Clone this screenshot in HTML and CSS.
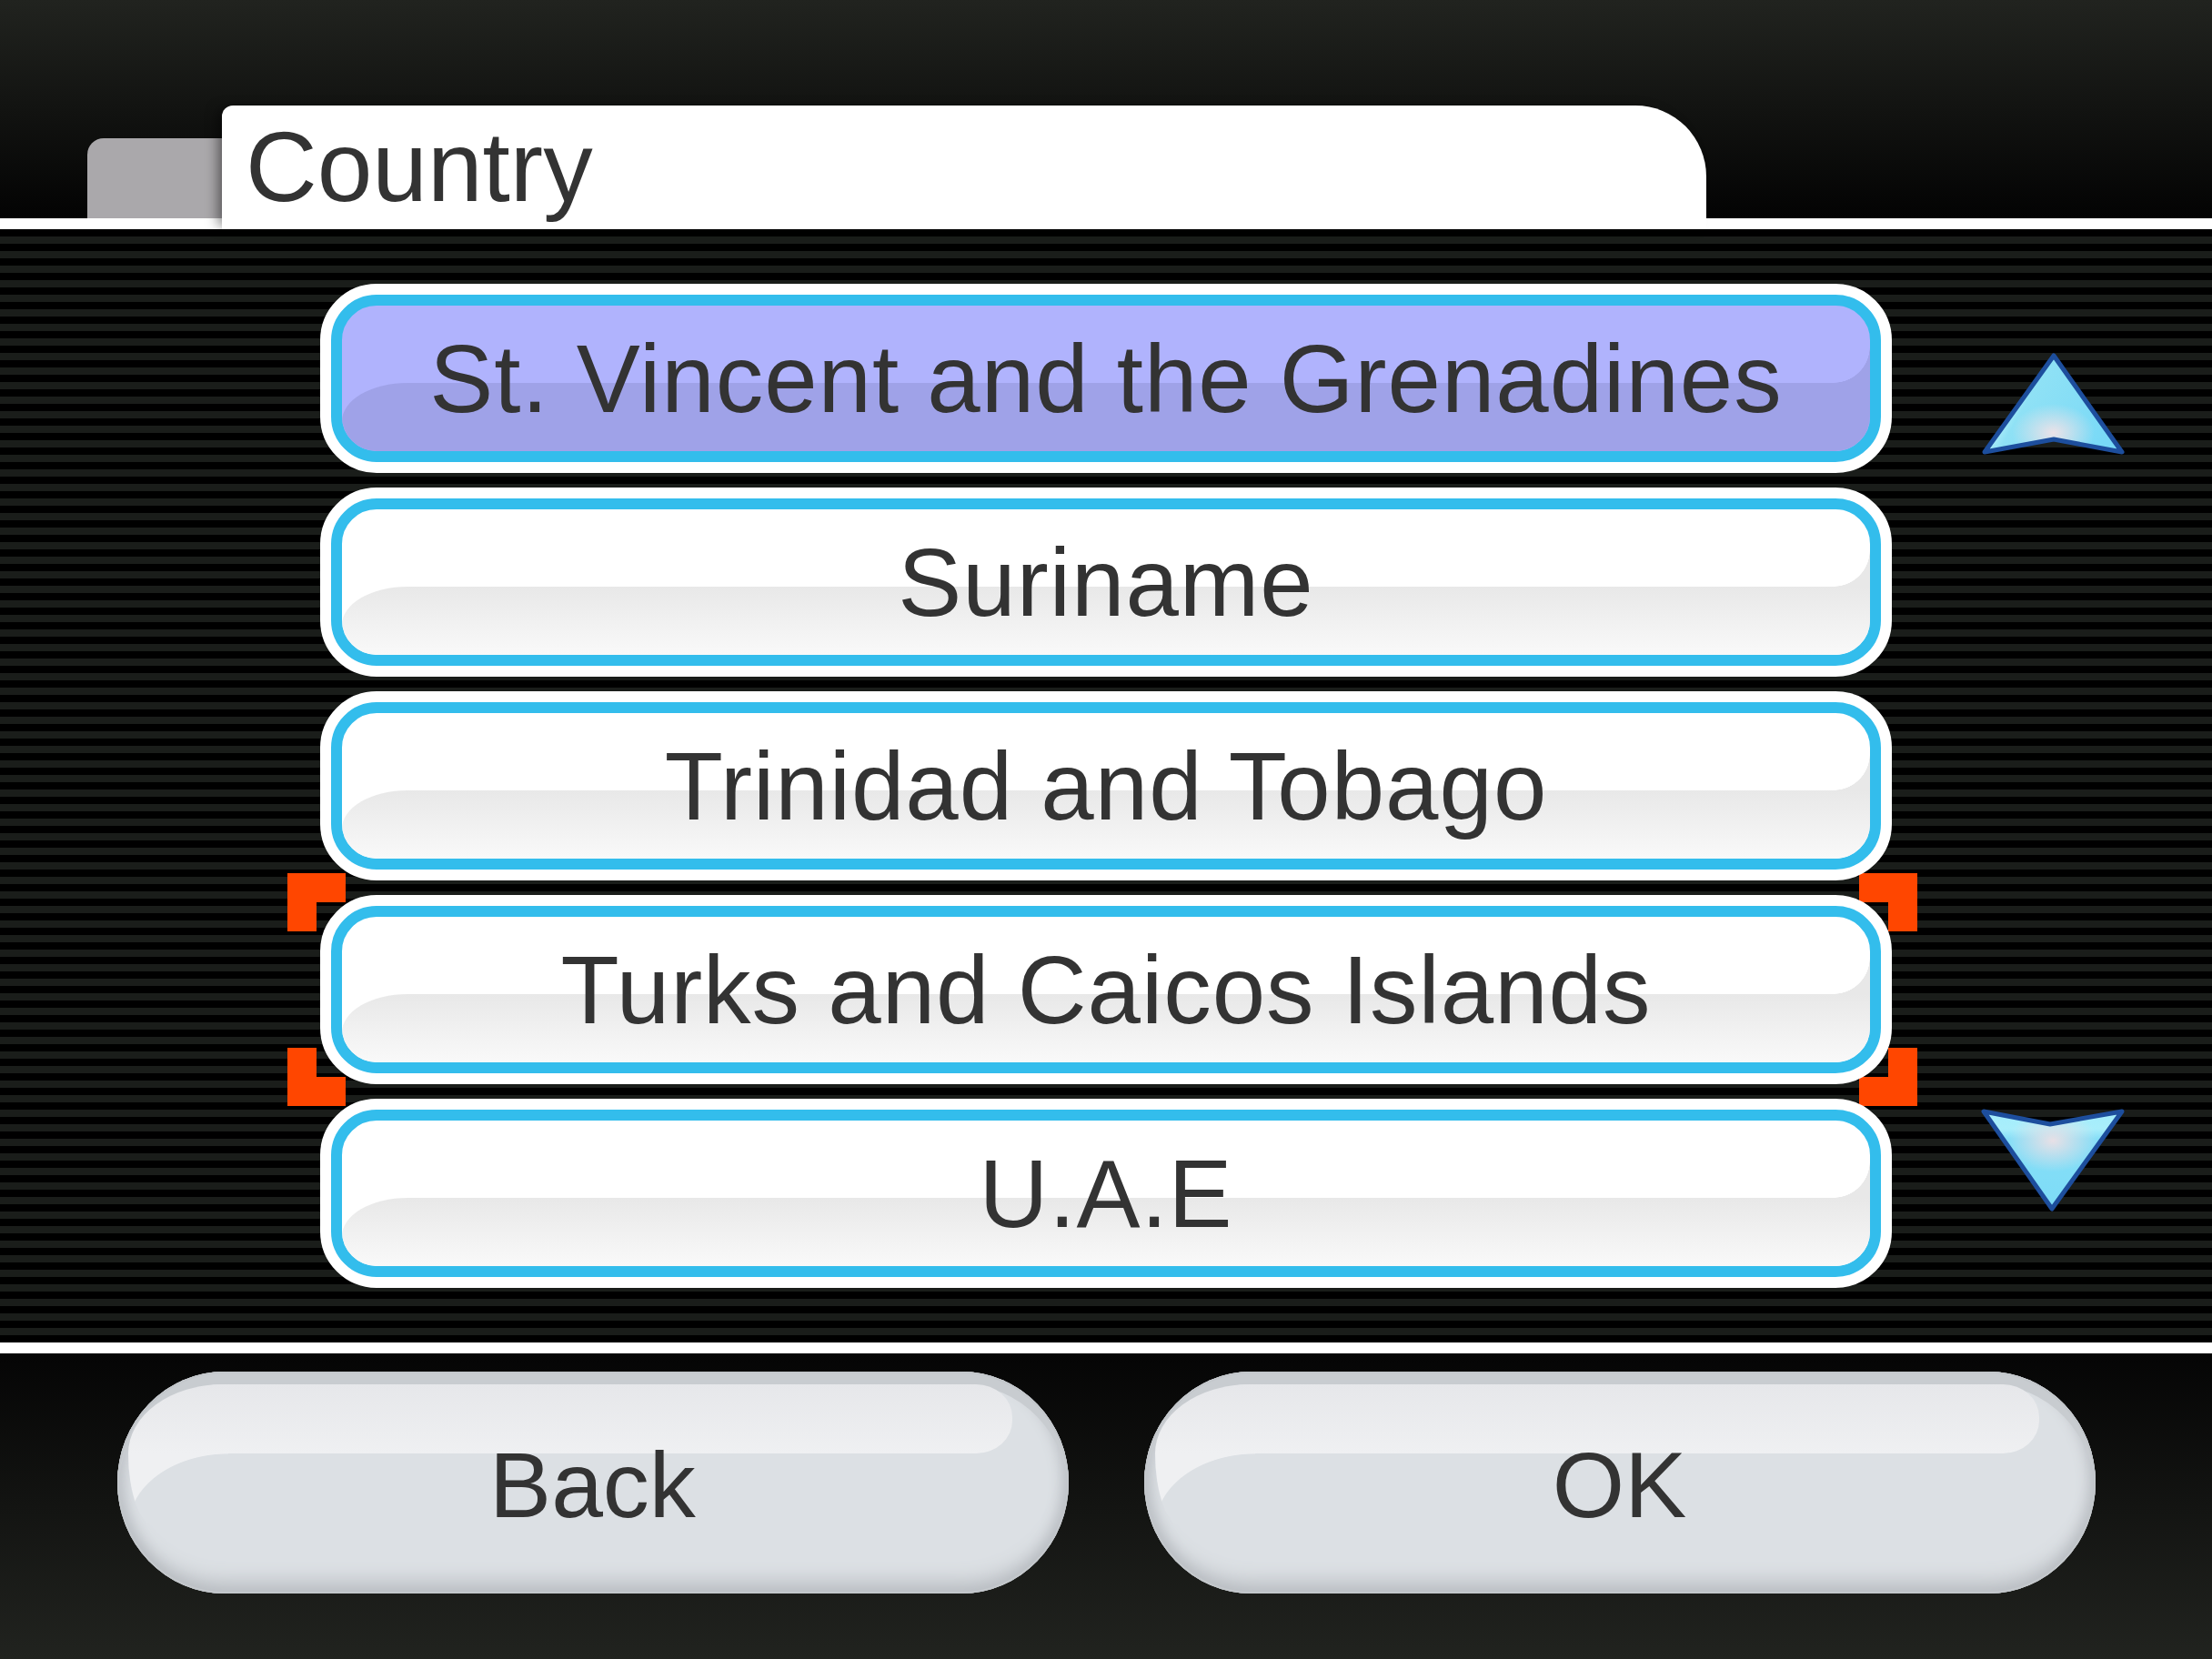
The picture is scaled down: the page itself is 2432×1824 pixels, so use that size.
FILE: index.html
```html
<!DOCTYPE html>
<html lang="en">
<head>
<meta charset="utf-8">
<title>Country</title>
<link rel="stylesheet" href="styles.css">
</head>
<body>
<div class="screen">
  <header class="header">
    <div class="tab-back"></div>
    <div class="tab-title">Country</div>
  </header>
  <div class="rule"></div>
  <main class="band">
    <div class="gutter"></div>
    <ul class="list">
      <li class="item selected"><div class="face"><span>St. Vincent and the Grenadines</span></div></li>
      <li class="item"><div class="face"><span>Suriname</span></div></li>
      <li class="item"><div class="face"><span>Trinidad and Tobago</span></div></li>
      <li class="item focused">
        <i class="bracket tl"></i><i class="bracket bl"></i><i class="bracket tr"></i><i class="bracket br"></i>
        <div class="face"><span>Turks and Caicos Islands</span></div>
      </li>
      <li class="item"><div class="face"><span>U.A.E</span></div></li>
    </ul>
    <div class="scroll">
      <svg class="arrow" width="160" height="120" viewBox="0 0 160 120">
        <defs>
          <linearGradient id="ug" x1="0" y1="0.2" x2="1" y2="0.6">
            <stop offset="0" stop-color="#9ae9fc"/>
            <stop offset="0.28" stop-color="#aaedf9"/>
            <stop offset="0.36" stop-color="#8fe1f5"/>
            <stop offset="0.7" stop-color="#84ddf6"/>
            <stop offset="1" stop-color="#78d9f7"/>
          </linearGradient>
          <radialGradient id="ur" cx="0.5" cy="0.8" r="0.3">
            <stop offset="0" stop-color="#ece2e8" stop-opacity="1"/>
            <stop offset="1" stop-color="#ece2e8" stop-opacity="0"/>
          </radialGradient>
        </defs>
        <path d="M82 7 L157 113 L82 99 L6 113 Z" fill="url(#ug)"/>
        <path d="M82 7 L157 113 L82 99 L6 113 Z" fill="url(#ur)"/>
        <path d="M82 7 L157 113 L82 99 L6 113 Z" fill="none" stroke="#1d4e9d" stroke-width="5" stroke-linejoin="round"/>
      </svg>
      <svg class="arrow down" width="160" height="120" viewBox="0 0 160 120">
        <defs>
          <linearGradient id="dg" x1="0" y1="0" x2="0" y2="1">
            <stop offset="0" stop-color="#a3edfc"/>
            <stop offset="0.18" stop-color="#a9eefb"/>
            <stop offset="0.28" stop-color="#86def7"/>
            <stop offset="1" stop-color="#7ddcf7"/>
          </linearGradient>
          <radialGradient id="dr" cx="0.5" cy="0.3" r="0.32">
            <stop offset="0" stop-color="#e8e0e6" stop-opacity="1"/>
            <stop offset="1" stop-color="#e8e0e6" stop-opacity="0"/>
          </radialGradient>
        </defs>
        <path d="M5 6 L78 20 L157 6 L80 113 Z" fill="url(#dg)"/>
        <path d="M5 6 L78 20 L157 6 L80 113 Z" fill="url(#dr)"/>
        <path d="M5 6 L78 20 L157 6 L80 113 Z" fill="none" stroke="#1d4e9d" stroke-width="5" stroke-linejoin="round"/>
      </svg>
    </div>
  </main>
  <div class="rule"></div>
  <footer class="footer">
    <div class="btn"><span>Back</span></div>
    <div class="btn"><span>OK</span></div>
  </footer>
</div>
</body>
</html>
```

FILE: styles.css
```css
html, body {
  margin: 0;
  padding: 0;
}

body {
  width: 2432px;
  height: 1824px;
  overflow: hidden;
  background: #000;
  font-family: "Liberation Sans", Arial, sans-serif;
  color: #333;
}

.header {
  height: 240px;
  box-sizing: border-box;
  display: flex;
  align-items: flex-end;
  padding-left: 96px;
  background: linear-gradient(#21231f, #030303);
}

.tab-back {
  flex: none;
  width: 160px;
  height: 88px;
  background: #aaa8ab;
  border-top-left-radius: 18px;
}

.tab-title {
  flex: none;
  position: relative;
  z-index: 2;
  margin-left: -12px;
  margin-bottom: -12px;
  width: 1632px;
  height: 136px;
  box-sizing: border-box;
  padding: 13px 0 0 26px;
  background: #fff;
  border-top-left-radius: 12px;
  border-top-right-radius: 78px;
  font-size: 109px;
  line-height: 1;
  box-shadow: -8px 0 14px -4px rgba(0, 0, 0, 0.5);
}

.rule {
  height: 12px;
  background: #fff;
}

.band {
  height: 1224px;
  display: grid;
  grid-template-columns: 352px 1728px 352px;
  background: repeating-linear-gradient(#000 0 8px, #1a1d1a 8px 16px);
}

.list {
  grid-column: 2;
  list-style: none;
  margin: 0;
  padding: 60px 0 0;
  display: flex;
  flex-direction: column;
  gap: 16px;
  position: relative;
  z-index: 0;
}

.item {
  position: relative;
  height: 208px;
  box-sizing: border-box;
  border: 12px solid #fff;
  border-radius: 62px;
  background: #fff;
}

.face {
  position: relative;
  height: 100%;
  box-sizing: border-box;
  border: 12px solid #33bdec;
  border-radius: 50px;
  overflow: hidden;
  background: #fff;
  display: flex;
  align-items: center;
  justify-content: center;
  font-size: 105px;
  line-height: 1;
  letter-spacing: 1px;
}

.face::before {
  content: "";
  position: absolute;
  left: 0;
  right: 0;
  top: 85px;
  bottom: 0;
  background: linear-gradient(#e8e8e8, #f9f9f9);
  border-top-left-radius: 72px 42px;
}

.face::after {
  content: "";
  position: absolute;
  right: 0;
  top: 45px;
  width: 40px;
  height: 40px;
  background: radial-gradient(circle 40px at 0 0, transparent 39.5px, #e8e8e8 40px);
}

.face span {
  position: relative;
  z-index: 1;
  white-space: nowrap;
}

.selected .face {
  background: #b0b3fd;
}

.selected .face::before {
  background: #9fa2e8;
}

.selected .face::after {
  background: radial-gradient(circle 40px at 0 0, transparent 39.5px, #9fa2e8 40px);
}

.bracket {
  position: absolute;
  z-index: -1;
  width: 32px;
  height: 32px;
  border: 0 solid #ff4600;
}

.bracket.tl { left: -48px; top: -36px; border-top-width: 32px; border-left-width: 32px; }
.bracket.bl { left: -48px; bottom: -36px; border-bottom-width: 32px; border-left-width: 32px; }
.bracket.tr { right: -40px; top: -36px; border-top-width: 32px; border-right-width: 32px; }
.bracket.br { right: -40px; bottom: -36px; border-bottom-width: 32px; border-right-width: 32px; }

.scroll {
  grid-column: 3;
  display: flex;
  flex-direction: column;
  align-items: flex-start;
  padding: 132px 0 0 96px;
}

.arrow {
  display: block;
  overflow: visible;
}

.arrow.down {
  margin-top: 712px;
}

.footer {
  height: 336px;
  box-sizing: border-box;
  padding-top: 20px;
  display: flex;
  justify-content: center;
  align-items: flex-start;
  gap: 83px;
  background: linear-gradient(#050505, #21231f);
}

.btn {
  position: relative;
  overflow: hidden;
  flex: none;
  width: 1046px;
  height: 244px;
  box-sizing: border-box;
  padding-top: 6px;
  border-radius: 118px / 122px;
  background: #dce0e4;
  box-shadow:
    inset 0 0 0 2px #c3c7cb,
    inset 0 14px 0 0 #c8ccd0,
    inset 0 -24px 22px -12px #b8bcc1,
    inset 14px 0 14px -6px #bfc3c8,
    inset -14px 0 14px -6px #bfc3c8;
  display: flex;
  align-items: center;
  justify-content: center;
  font-size: 102px;
  line-height: 1;
  color: #333;
}

.btn::before {
  content: "";
  position: absolute;
  top: 14px;
  left: 12px;
  right: 62px;
  height: 76px;
  background: linear-gradient(#e6e7ea, #eff0f2);
  border-radius: 104px 40px 40px 0 / 76px 36px 36px 0;
}

.btn::after {
  content: "";
  position: absolute;
  top: 90px;
  left: 12px;
  width: 110px;
  height: 80px;
  background: radial-gradient(110px 80px at 100% 100%, #dce0e4 99%, #eff0f2 100%);
  border-bottom-left-radius: 30px 80px;
}

.btn span {
  position: relative;
  z-index: 1;
}
```
